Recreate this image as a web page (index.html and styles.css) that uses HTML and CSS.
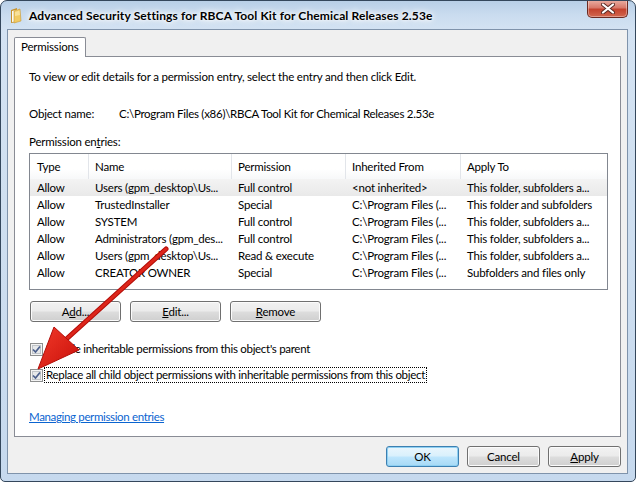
FILE: index.html
```html
<!DOCTYPE html>
<html>
<head>
<meta charset="utf-8">
<link rel="stylesheet" href="styles.css">
</head>
<body>
<div class="window">
  <div class="titlebar">
    <svg class="folder" width="16" height="17" viewBox="0 0 16 17">
      <path d="M2 3 L8 1 L8 15 L2 16 Z" fill="#c8922c"/>
      <path d="M3 4 L9 2.5 L9 14 L3 15 Z" fill="#fbfbf4"/>
      <path d="M5 4 L11 2 L12 14 L5 16 Z" fill="#f1cb63" stroke="#c99a35" stroke-width="0.6"/>
      <path d="M6 5 L10.5 3.5 L11 8 L6 9 Z" fill="#f8e19a"/>
    </svg>
    <span class="title">Advanced Security Settings for RBCA Tool Kit for Chemical Releases 2.53e</span>
    <div class="close">
      <svg width="14" height="11" viewBox="0 0 14 11">
        <path d="M2 1.5 L12 9.5 M12 1.5 L2 9.5" stroke="#5b2b25" stroke-width="4" stroke-linecap="round"/>
        <path d="M2 1.5 L12 9.5 M12 1.5 L2 9.5" stroke="#ffffff" stroke-width="2.2" stroke-linecap="round"/>
      </svg>
    </div>
  </div>
  <div class="client">
    <div class="tabs"><div class="tab">Permissions</div></div>
    <div class="panel">
      <p class="intro">To view or edit details for a permission entry, select the entry and then click Edit.</p>
      <div class="objrow"><span class="objlabel">Object name:</span><span class="objval">C:\Program Files (x86)\RBCA Tool Kit for Chemical Releases 2.53e</span></div>
      <div class="entries-label">Permission en<u>t</u>ries:</div>
      <div class="listbox">
        <div class="lrow header"><span>Type</span><span>Name</span><span>Permission</span><span>Inherited From</span><span>Apply To</span></div>
        <div class="lrow sel"><span>Allow</span><span>Users (gpm_desktop\Us...</span><span>Full control</span><span>&lt;not inherited&gt;</span><span>This folder, subfolders a...</span></div>
        <div class="lrow"><span>Allow</span><span>TrustedInstaller</span><span>Special</span><span>C:\Program Files (...</span><span>This folder and subfolders</span></div>
        <div class="lrow"><span>Allow</span><span>SYSTEM</span><span>Full control</span><span>C:\Program Files (...</span><span>This folder, subfolders a...</span></div>
        <div class="lrow"><span>Allow</span><span>Administrators (gpm_des...</span><span>Full control</span><span>C:\Program Files (...</span><span>This folder, subfolders a...</span></div>
        <div class="lrow"><span>Allow</span><span>Users (gpm_desktop\Us...</span><span>Read &amp; execute</span><span>C:\Program Files (...</span><span>This folder, subfolders a...</span></div>
        <div class="lrow"><span>Allow</span><span>CREATOR OWNER</span><span>Special</span><span>C:\Program Files (...</span><span>Subfolders and files only</span></div>
      </div>
      <div class="btnrow">
        <button class="btn">A<u>d</u>d...</button>
        <button class="btn"><u>E</u>dit...</button>
        <button class="btn"><u>R</u>emove</button>
      </div>
      <div class="check first">
        <svg class="cb" width="13" height="13" viewBox="0 0 13 13"><rect x="0.5" y="0.5" width="12" height="12" fill="#f4f4f4" stroke="#8e8f8f"/><rect x="2.5" y="2.5" width="8" height="8" fill="#e6e8ea" stroke="#c0c4c8"/><path d="M3 6.5 L5.5 9 L10 3.5" fill="none" stroke="#4b5f8c" stroke-width="1.7"/></svg>
        <span class="clabel">Include inheritable permissions from this object's parent</span>
      </div>
      <div class="check second">
        <svg class="cb" width="13" height="13" viewBox="0 0 13 13"><rect x="0.5" y="0.5" width="12" height="12" fill="#f4f4f4" stroke="#8e8f8f"/><rect x="2.5" y="2.5" width="8" height="8" fill="#e6e8ea" stroke="#c0c4c8"/><path d="M3 6.5 L5.5 9 L10 3.5" fill="none" stroke="#4b5f8c" stroke-width="1.7"/></svg>
        <span class="clabel focus">Replace all child object permissions with inheritable permissions from this object</span>
      </div>
      <a class="link" href="#">Managing permission entries</a>
    </div>
    <div class="footer">
      <button class="btn small default">OK</button>
      <button class="btn small">Cancel</button>
      <button class="btn small"><u>A</u>pply</button>
    </div>
  </div>
  <svg class="arrow" width="636" height="482" viewBox="0 0 636 482">
    <defs>
      <linearGradient id="ag" x1="0" y1="0" x2="1" y2="1">
        <stop offset="0" stop-color="#f23a2a"/>
        <stop offset="1" stop-color="#c8100a"/>
      </linearGradient>
    </defs>
    <line x1="166" y1="249" x2="62" y2="343" stroke="#b30d08" stroke-width="5" stroke-linecap="round"/>
    <line x1="166" y1="249" x2="62" y2="343" stroke="url(#ag)" stroke-width="3" stroke-linecap="round"/>
    <path d="M38 369 L54 327 L79 350 Z" fill="url(#ag)" stroke="#b30d08" stroke-width="1"/>
  </svg>
</div>
</body>
</html>
```
FILE: styles.css
```css
* { box-sizing: border-box; }
html, body { margin: 0; padding: 0; background: #ffffff; }
body {
  font-family: Lato, "Noto Sans", sans-serif;
  font-size: 11.5px;
  letter-spacing: -0.2px;
  color: #000;
}
.window {
  position: relative;
  width: 636px;
  height: 482px;
  border: 1px solid #34475c;
  border-radius: 7px 7px 5px 5px;
  background: linear-gradient(180deg, #b8cfe7 0px, #cadcef 14px, #d4e3f3 30px, #cfdff0 200px, #c6d9ee 482px);
  padding: 0 7px 7px 6px;
  display: flex;
  flex-direction: column;
  overflow: hidden;
}
.titlebar {
  height: 28px;
  display: flex;
  align-items: flex-start;
  flex: none;
}
.folder {
  margin: 6px 0 0 2px;
  flex: none;
}
.title {
  margin: 7px 0 0 4px;
  font-size: 12px;
  font-weight: 700;
  line-height: 15px;
  letter-spacing: 0.13px;
  text-shadow: 0 0 6px #ffffff, 0 0 8px #ffffff, 0 0 3px #ffffff;
  flex: 1;
  white-space: nowrap;
}
.close {
  width: 41px;
  height: 18px;
  margin: -1px 0 0 0;
  border: 1px solid #6b2a22;
  border-top: none;
  border-radius: 0 0 5px 5px;
  background: linear-gradient(180deg, #eab0a4 0%, #d8796a 45%, #c4432e 55%, #d2674f 100%);
  box-shadow: inset 0 0 0 1px rgba(255,255,255,0.35);
  display: flex;
  align-items: center;
  justify-content: center;
  flex: none;
}
.client {
  flex: 1;
  border: 1px solid #7f93ab;
  background: #f0f0f0;
  padding: 7px 6px 0 6px;
  display: flex;
  flex-direction: column;
}
.tabs {
  display: flex;
  height: 19px;
  position: relative;
  z-index: 1;
}
.tab {
  height: 20px;
  padding: 0 6px 0 6px;
  border: 1px solid #898c95;
  border-bottom: none;
  background: #ffffff;
  line-height: 18px;
  border-radius: 2px 2px 0 0;
}
.panel {
  height: 381px;
  border: 1px solid #898c95;
  background: #ffffff;
  padding: 12px 12px 0 14px;
  display: flex;
  flex-direction: column;
  align-items: flex-start;
}
.intro {
  margin: 0;
  line-height: 15px;
}
.objrow {
  margin-top: 22px;
  line-height: 15px;
  display: flex;
}
.objlabel { width: 90px; flex: none; }
.objval { letter-spacing: -0.28px; }
.entries-label {
  margin-top: 13px;
  line-height: 15px;
}
.listbox {
  margin-top: 4px;
  width: 579px;
  height: 137px;
  border: 1px solid #828790;
  background: #fff;
}
.lrow {
  display: grid;
  grid-template-columns: 59px 143px 114px 115px 1fr;
  height: 17px;
  line-height: 17px;
  white-space: nowrap;
}
.lrow span { padding-left: 6px; overflow: hidden; }
.lrow span:first-child { padding-left: 7px; }
.lrow.header {
  height: 25px;
  background: linear-gradient(180deg, #ffffff 0%, #ffffff 60%, #f7f8f9 100%);
}
.lrow.header span {
  border-right: 1px solid #e2e5ea;
  height: 25px;
  line-height: 26px;
}
.lrow.header span:last-child { border-right: none; }
.lrow.sel { background: linear-gradient(180deg, #f3f3f3, #e9e9e9); }
.btnrow {
  margin-top: 11px;
  display: flex;
  gap: 9px;
  margin-left: 1px;
}
.btn {
  font-family: inherit;
  font-size: 11.5px;
  letter-spacing: -0.2px;
  color: #000;
  width: 91px;
  height: 21px;
  padding: 0;
  border: 1px solid #707070;
  border-radius: 3px;
  background: linear-gradient(180deg, #f2f2f2 0%, #ebebeb 48%, #dddddd 52%, #cfcfcf 100%);
  box-shadow: inset 0 0 0 1px #fbfbfb;
}
.check {
  display: flex;
  align-items: center;
  height: 16px;
  margin-left: 1px;
}
.check.first { margin-top: 19px; }
.check.second { margin-top: 10px; }
.cb { flex: none; }
.clabel { margin-left: 1px; line-height: 14px; padding: 0 1px; border: 1px solid transparent; letter-spacing: -0.3px; }
.clabel.focus { border: 1px dotted #000; }
.link {
  margin-top: 26px;
  color: #0a64d0;
  line-height: 15px;
  text-decoration: underline;
  letter-spacing: -0.35px;
}
.footer {
  margin-top: 9px;
  display: flex;
  justify-content: flex-end;
  gap: 8px;
}
.btn.small {
  width: 73px;
  height: 21px;
}
.btn.default {
  border-color: #3c7fb1;
  background: linear-gradient(180deg, #eaf6fd 0%, #d9f0fc 48%, #bee6fd 52%, #a7d9f5 100%);
  box-shadow: inset 0 0 0 1px #8fd0f2;
}
.arrow {
  position: absolute;
  left: -1px;
  top: -1px;
  pointer-events: none;
}
```
